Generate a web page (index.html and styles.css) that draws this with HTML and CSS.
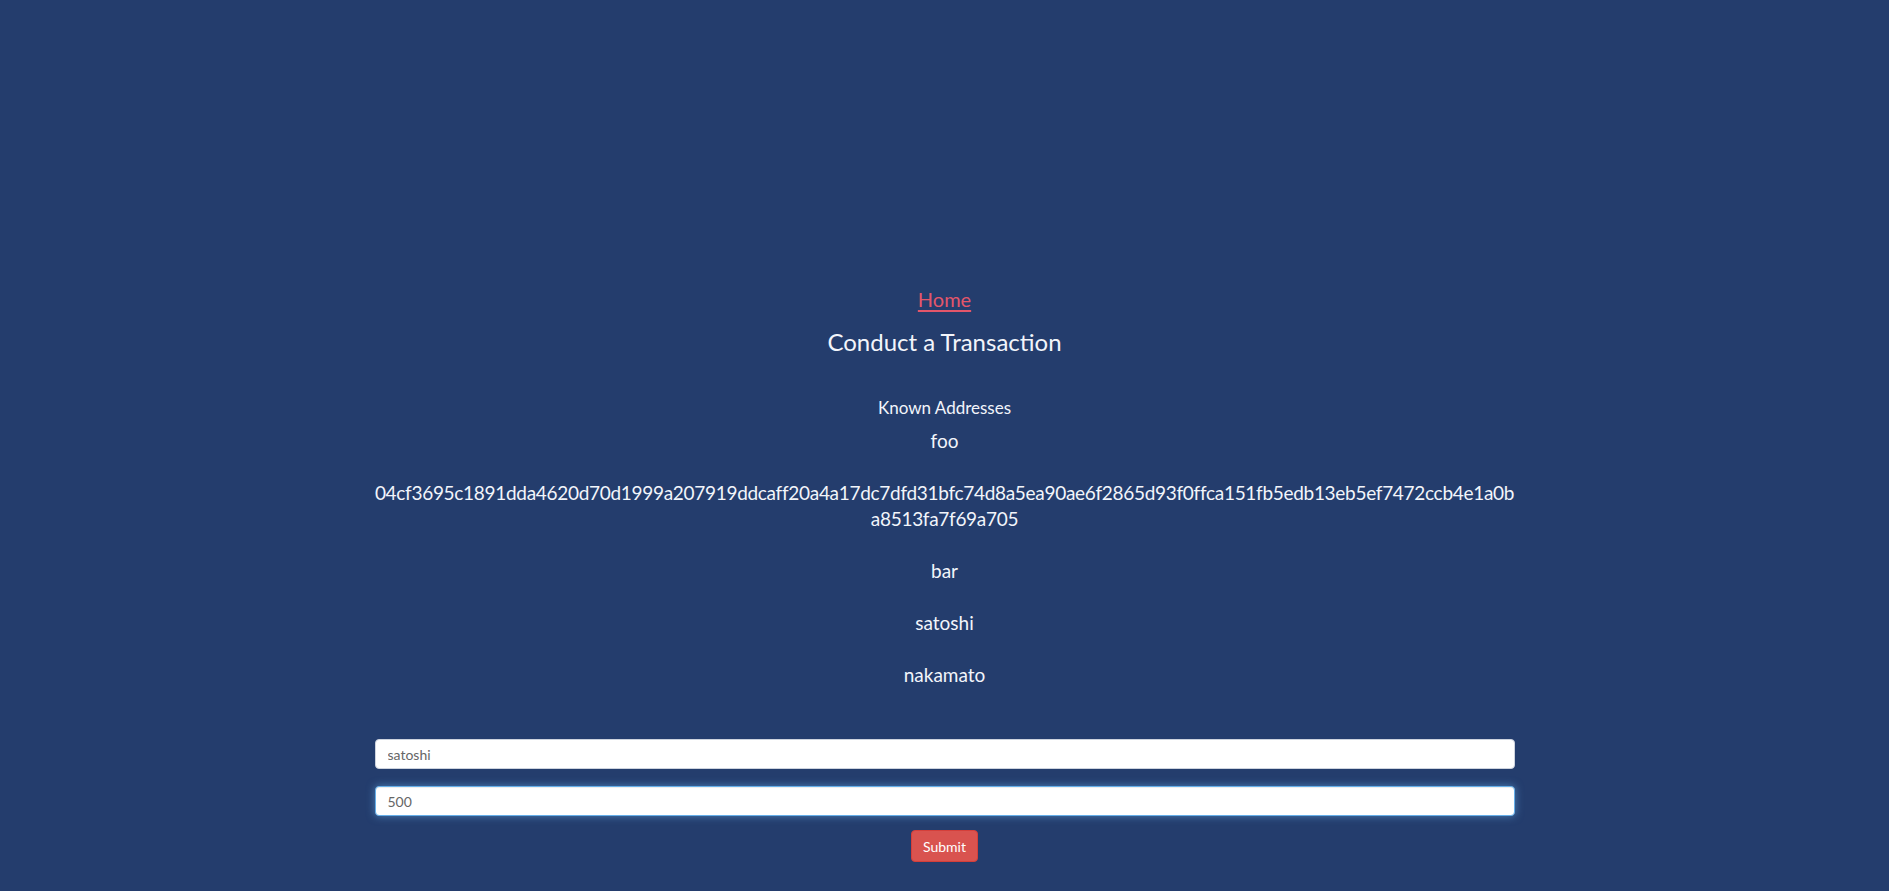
FILE: index.html
```html
<!DOCTYPE html>
<html lang="en">
<head>
<meta charset="utf-8">
<title>Conduct a Transaction</title>
<link rel="stylesheet" href="styles.css">
</head>
<body>
<div class="container">
  <a class="home-link" href="#">Home</a>
  <h2 class="title">Conduct a Transaction</h2>
  <h4 class="known-title">Known Addresses</h4>
  <div class="address-list">
    <div class="address">foo</div>
    <div class="address hex">04cf3695c1891dda4620d70d1999a207919ddcaff20a4a17dc7dfd31bfc74d8a5ea90ae6f2865d93f0ffca151fb5edb13eb5ef7472ccb4e1a0ba8513fa7f69a705</div>
    <div class="address">bar</div>
    <div class="address">satoshi</div>
    <div class="address">nakamato</div>
  </div>
  <form class="tx-form">
    <input class="form-control" type="text" value="satoshi">
    <input class="form-control focused" type="text" value="500">
    <div class="actions">
      <button class="btn-danger" type="button">Submit</button>
    </div>
  </form>
</div>
</body>
</html>
```

FILE: styles.css
```css
html, body {
  margin: 0;
  padding: 0;
}
body {
  background: #243d6d;
  color: #f2f5fb;
  font-family: "Lato", "Noto Sans", sans-serif;
  min-height: 891px;
}
.container {
  width: 1140px;
  margin: 0 auto;
  padding-top: 287px;
  text-align: center;
}
.home-link {
  display: block;
  width: max-content;
  margin: 0 auto;
  font-size: 20px;
  line-height: 24px;
  color: #e3566a;
  text-decoration: underline;
  text-underline-offset: 3px;
}
.title {
  margin: 16px 0 0;
  font-size: 24px;
  line-height: 30px;
  font-weight: 400;
}
.known-title {
  margin: 40px 0 0;
  font-size: 17px;
  line-height: 22px;
  font-weight: 400;
}
.address-list {
  margin-top: 9px;
  display: flex;
  flex-direction: column;
  gap: 26px;
}
.address {
  font-size: 19px;
  line-height: 26px;
}
.hex {
  word-break: break-all;
  letter-spacing: -0.3px;
}
.tx-form {
  margin-top: 51px;
  display: flex;
  flex-direction: column;
}
.form-control {
  box-sizing: border-box;
  width: 100%;
  height: 30px;
  padding: 0 12px;
  border: 1px solid #cdd3de;
  border-radius: 4px;
  background: #fff;
  color: #666;
  font-family: "Lato", "Noto Sans", sans-serif;
  font-size: 14px;
  outline: none;
}
.form-control + .form-control {
  margin-top: 17px;
}
.focused {
  border-color: #66afe9;
  box-shadow: inset 0 1px 1px rgba(0,0,0,.075), 0 0 8px rgba(102,175,233,.6);
}
.actions {
  margin-top: 14px;
  display: flex;
  justify-content: center;
}
.btn-danger {
  width: 67px;
  height: 32px;
  padding: 0;
  background: #d9534f;
  border: 1px solid #d43f3a;
  border-radius: 4px;
  color: #fff;
  font-family: "Lato", "Noto Sans", sans-serif;
  font-size: 14px;
}
```
